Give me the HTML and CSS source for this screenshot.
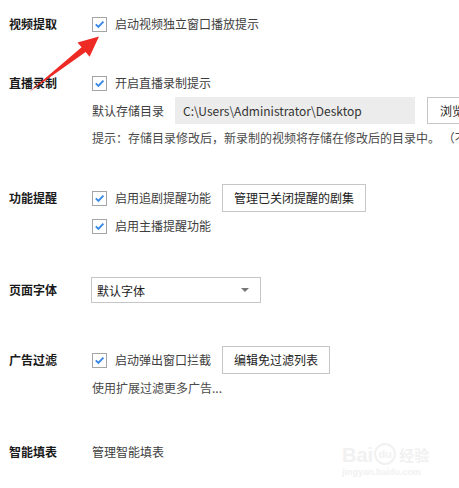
FILE: index.html
```html
<!DOCTYPE html>
<html lang="zh">
<head>
<meta charset="utf-8">
<link rel="stylesheet" href="styles.css">
</head>
<body>
<div class="page">
  <section class="sec sec-1">
    <div class="label">视频提取</div>
    <div class="body">
      <div class="row"><span class="cb"><svg viewBox="0 0 13 13"><path d="M2.8 6.4 L5.4 8.9 L10.4 3.6" fill="none" stroke="#3b8ae6" stroke-width="2"/></svg></span><span class="txt">启动视频独立窗口播放提示</span></div>
    </div>
  </section>

  <section class="sec sec-2">
    <div class="label">直播录制</div>
    <div class="body">
      <div class="row"><span class="cb"><svg viewBox="0 0 13 13"><path d="M2.8 6.4 L5.4 8.9 L10.4 3.6" fill="none" stroke="#3b8ae6" stroke-width="2"/></svg></span><span class="txt">开启直播录制提示</span></div>
      <div class="row dir-row"><span class="txt">默认存储目录</span><span class="path">C:\Users\Administrator\Desktop</span><span class="btn btn-browse">浏览</span></div>
      <div class="hint">提示：存储目录修改后，新录制的视频将存储在修改后的目录中。 （不</div>
    </div>
  </section>

  <section class="sec sec-3">
    <div class="label">功能提醒</div>
    <div class="body">
      <div class="row"><span class="cb"><svg viewBox="0 0 13 13"><path d="M2.8 6.4 L5.4 8.9 L10.4 3.6" fill="none" stroke="#3b8ae6" stroke-width="2"/></svg></span><span class="txt">启用追剧提醒功能</span><span class="btn">管理已关闭提醒的剧集</span></div>
      <div class="row"><span class="cb"><svg viewBox="0 0 13 13"><path d="M2.8 6.4 L5.4 8.9 L10.4 3.6" fill="none" stroke="#3b8ae6" stroke-width="2"/></svg></span><span class="txt">启用主播提醒功能</span></div>
    </div>
  </section>

  <section class="sec sec-4">
    <div class="label">页面字体</div>
    <div class="body">
      <div class="row"><div class="select"><span class="sel-txt">默认字体</span><span class="caret"></span></div></div>
    </div>
  </section>

  <section class="sec sec-5">
    <div class="label">广告过滤</div>
    <div class="body">
      <div class="row"><span class="cb"><svg viewBox="0 0 13 13"><path d="M2.8 6.4 L5.4 8.9 L10.4 3.6" fill="none" stroke="#3b8ae6" stroke-width="2"/></svg></span><span class="txt">启动弹出窗口拦截</span><span class="btn btn-edit">编辑免过滤列表</span></div>
      <div class="hint">使用扩展过滤更多广告...</div>
    </div>
  </section>

  <section class="sec sec-6">
    <div class="label">智能填表</div>
    <div class="body">
      <div class="row"><span class="txt">管理智能填表</span></div>
    </div>
  </section>

  <svg class="arrow" viewBox="0 0 459 488" width="459" height="488">
    <polygon points="99,36.5 77.5,42.5 81.6,47.2 28.5,92.5 85.6,52 89.6,56.8" fill="#ee2a25"/>
  </svg>

  <div class="watermark">
    <div class="wm-top"><span class="wm-bai">Bai</span><span class="wm-du">du</span><span class="wm-jy">经验</span></div>
    <div class="wm-url">jingyan.baidu.com</div>
  </div>
</div>
</body>
</html>
```

FILE: styles.css
```css
html, body {
  margin: 0;
  padding: 0;
  background: #ffffff;
  overflow: hidden;
}
body {
  width: 459px;
  height: 488px;
  font-family: "Noto Sans CJK SC", "Microsoft YaHei", sans-serif;
  font-size: 12px;
  color: #3a3a3a;
}
.page {
  position: relative;
  width: 459px;
  height: 488px;
  padding: 10px 0 0 9px;
  box-sizing: border-box;
}
.sec {
  display: flex;
  align-items: flex-start;
}
.sec-2 { margin-top: 31px; }
.sec-3 { margin-top: 36px; }
.sec-4 { margin-top: 36px; }
.sec-5 { margin-top: 42px; }
.sec-6 { margin-top: 40px; }

.label {
  width: 83px;
  flex: none;
  height: 28px;
  line-height: 28px;
  font-weight: bold;
  color: #1a1a1a;
  font-size: 12px;
}
.body {
  display: flex;
  flex-direction: column;
}
.row {
  display: flex;
  align-items: center;
  height: 28px;
  white-space: nowrap;
}
.cb {
  width: 15px;
  height: 15px;
  box-sizing: border-box;
  border: 1px solid #a5a5a5;
  background: #fff;
  margin-right: 8px;
  flex: none;
  display: flex;
}
.cb svg {
  width: 13px;
  height: 13px;
}
.txt {
  color: #3d3d3d;
  line-height: 20px;
}
.btn {
  height: 28px;
  box-sizing: border-box;
  border: 1px solid #c6c6c6;
  padding: 0 11px;
  line-height: 26px;
  margin-left: 11px;
  color: #222;
  background: #fff;
  flex: none;
}
.btn-edit { padding: 0 11px; }
.dir-row {
  height: 27px;
}
.path {
  margin-left: 11px;
  width: 240px;
  height: 27px;
  line-height: 27px;
  background: #ececec;
  padding-left: 8px;
  box-sizing: border-box;
  color: #333;
  flex: none;
}
.btn-browse {
  margin-left: 12px;
  height: 27px;
  line-height: 25px;
  padding: 0 12px;
}
.hint {
  margin-top: 4px;
  line-height: 20px;
  height: 20px;
  white-space: nowrap;
  color: #4a4a4a;
}
.select {
  margin-left: -1px;
  width: 170px;
  height: 26px;
  box-sizing: border-box;
  border: 1px solid #c6c6c6;
  display: flex;
  align-items: center;
  justify-content: space-between;
  padding: 0 11px 0 5px;
  color: #222;
}
.caret {
  width: 0;
  height: 0;
  border-left: 4px solid transparent;
  border-right: 4px solid transparent;
  border-top: 4px solid #777;
}
.arrow {
  position: absolute;
  left: 0;
  top: 0;
  pointer-events: none;
}
.watermark {
  position: absolute;
  left: 342px;
  top: 440px;
  color: #f1f1f1;
  font-family: "Liberation Sans", sans-serif;
}
.wm-top {
  display: flex;
  align-items: flex-end;
  height: 26px;
}
.wm-bai {
  font-size: 20px;
  font-weight: bold;
  line-height: 22px;
}
.wm-du {
  font-size: 11px;
  font-weight: bold;
  border: 2px solid #f1f1f1;
  border-radius: 50%;
  width: 18px;
  height: 18px;
  line-height: 18px;
  text-align: center;
  margin: 0 3px 1px 1px;
}
.wm-jy {
  font-family: "Noto Sans CJK SC", sans-serif;
  font-size: 15px;
  font-weight: bold;
  line-height: 22px;
}
.wm-url {
  font-size: 9px;
  font-weight: bold;
  line-height: 11px;
  margin-top: 1px;
}
```
